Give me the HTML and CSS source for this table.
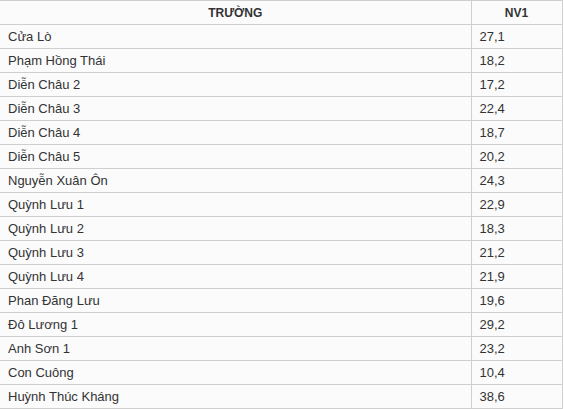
FILE: index.html
```html
<!DOCTYPE html>
<html lang="vi">
<head>
<meta charset="utf-8">
<title>Điểm chuẩn NV1</title>
<link rel="stylesheet" href="styles.css">
</head>
<body>
<table class="scores">
  <colgroup>
    <col class="col-name">
    <col class="col-score">
  </colgroup>
  <thead>
    <tr><th>TRƯỜNG</th><th>NV1</th></tr>
  </thead>
  <tbody>
    <tr><td>Cửa Lò</td><td>27,1</td></tr>
    <tr><td>Phạm Hồng Thái</td><td>18,2</td></tr>
    <tr><td>Diễn Châu 2</td><td>17,2</td></tr>
    <tr><td>Diễn Châu 3</td><td>22,4</td></tr>
    <tr><td>Diễn Châu 4</td><td>18,7</td></tr>
    <tr><td>Diễn Châu 5</td><td>20,2</td></tr>
    <tr><td>Nguyễn Xuân Ôn</td><td>24,3</td></tr>
    <tr><td>Quỳnh Lưu 1</td><td>22,9</td></tr>
    <tr><td>Quỳnh Lưu 2</td><td>18,3</td></tr>
    <tr><td>Quỳnh Lưu 3</td><td>21,2</td></tr>
    <tr><td>Quỳnh Lưu 4</td><td>21,9</td></tr>
    <tr><td>Phan Đăng Lưu</td><td>19,6</td></tr>
    <tr><td>Đô Lương 1</td><td>29,2</td></tr>
    <tr><td>Anh Sơn 1</td><td>23,2</td></tr>
    <tr><td>Con Cuông</td><td>10,4</td></tr>
    <tr><td>Huỳnh Thúc Kháng</td><td>38,6</td></tr>
  </tbody>
</table>
</body>
</html>
```
FILE: styles.css
```css
html, body {
  margin: 0;
  padding: 0;
  background: #ffffff;
}

.scores {
  border-collapse: collapse;
  width: 562px;
  table-layout: fixed;
  font-family: "Liberation Sans", Arial, sans-serif;
  font-size: 13px;
  color: #333333;
  background: #fbfbfb;
}

.col-name { width: 471px; }
.col-score { width: 91px; }

.scores th,
.scores td {
  border: 1px solid #cfcfcf;
  height: 23px;
  padding: 0 8px;
  vertical-align: middle;
  line-height: 16px;
}

.scores th:first-child,
.scores td:first-child {
  border-left: none;
}

.scores th {
  font-weight: bold;
  text-align: center;
  font-size: 12px;
}

.scores td {
  text-align: left;
}
```
